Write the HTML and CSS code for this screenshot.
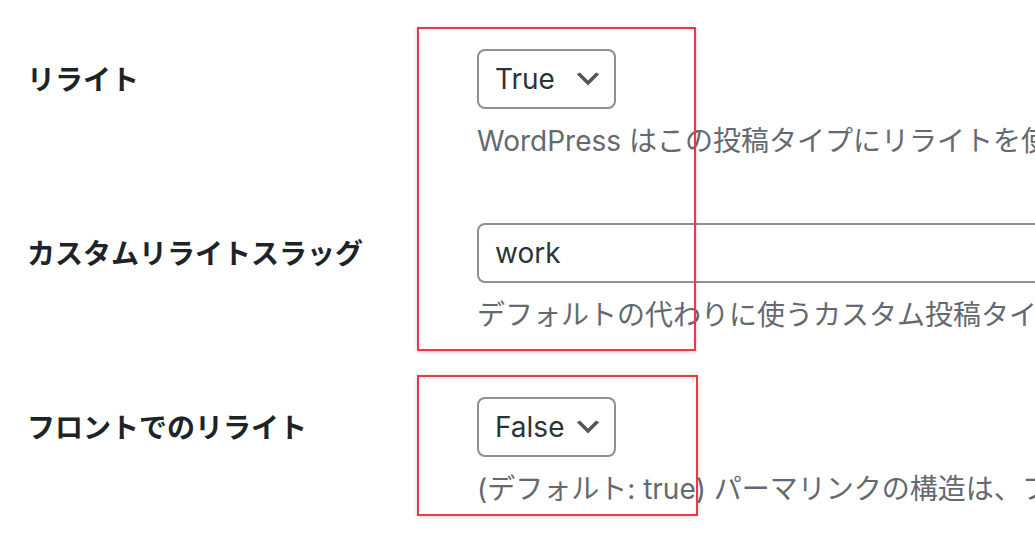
FILE: index.html
```html
<!DOCTYPE html>
<html lang="ja">
<head>
<meta charset="utf-8">
<title>リライト設定</title>
<link rel="stylesheet" href="styles.css">
</head>
<body>
<div class="form-table">
  <div class="row">
    <div class="th">リライト</div>
    <div class="td">
      <div class="select"><span class="select-value">True</span>
        <svg class="chev" viewBox="0 0 20 20" width="32" height="32"><path d="M5 6l5 5 5-5 2 1-7 7-7-7 2-1z" fill="#50575e"/></svg>
      </div>
      <p class="description">WordPress はこの投稿タイプにリライトを使用するかどうかを設定します。</p>
    </div>
  </div>
  <div class="row">
    <div class="th">カスタムリライトスラッグ</div>
    <div class="td">
      <div class="text-input">work</div>
      <p class="description">デフォルトの代わりに使うカスタム投稿タイプのスラッグ。</p>
    </div>
  </div>
  <div class="row">
    <div class="th">フロントでのリライト</div>
    <div class="td">
      <div class="select"><span class="select-value">False</span>
        <svg class="chev" viewBox="0 0 20 20" width="32" height="32"><path d="M5 6l5 5 5-5 2 1-7 7-7-7 2-1z" fill="#50575e"/></svg>
      </div>
      <p class="description">(デフォルト: true) パーマリンクの構造は、フロントベースで始めるべきかどうか。</p>
    </div>
  </div>
</div>
<div class="mark mark-1"></div>
<div class="mark mark-2"></div>
</body>
</html>
```
FILE: styles.css
```css
html, body {
  margin: 0;
  padding: 0;
  background: #ffffff;
  overflow: hidden;
}
body {
  font-family: "Inter", "Noto Sans CJK JP", sans-serif;
  color: #1d2327;
  width: 1035px;
  height: 542px;
  position: relative;
}
.form-table {
  display: flex;
  flex-direction: column;
  padding: 19px 0 0 27px;
}
.row {
  display: flex;
  height: 174px;
}
.th {
  width: 450px;
  flex: none;
  padding-top: 41px;
  font-size: 28px;
  line-height: 36px;
  font-weight: 700;
  color: #1d2327;
  font-family: "Noto Sans CJK JP", sans-serif;
  white-space: nowrap;
}
.td {
  padding-top: 30px;
  flex: none;
  display: flex;
  flex-direction: column;
  align-items: flex-start;
}
.select {
  box-sizing: border-box;
  width: 139px;
  height: 60px;
  border: 2px solid #8c8f94;
  border-radius: 8px;
  display: flex;
  align-items: center;
  justify-content: space-between;
  padding: 0 10px 0 16px;
  font-size: 28px;
  color: #2c3338;
}
.chev {
  display: block;
}
.text-input {
  box-sizing: border-box;
  width: 700px;
  height: 60px;
  border: 2px solid #8c8f94;
  border-radius: 8px;
  display: flex;
  align-items: center;
  padding: 0 16px;
  font-size: 28px;
  color: #2c3338;
}
.description {
  margin: 11px 0 0;
  font-size: 28px;
  line-height: 42px;
  color: #646970;
  white-space: nowrap;
}
.mark {
  position: absolute;
  box-sizing: border-box;
  border: 2px solid #f3354a;
  box-shadow: 0 1px 4px rgba(0, 0, 0, 0.18);
}
.mark-1 {
  left: 417px;
  top: 27px;
  width: 279px;
  height: 324px;
}
.mark-2 {
  left: 417px;
  top: 375px;
  width: 281px;
  height: 141px;
}
```
